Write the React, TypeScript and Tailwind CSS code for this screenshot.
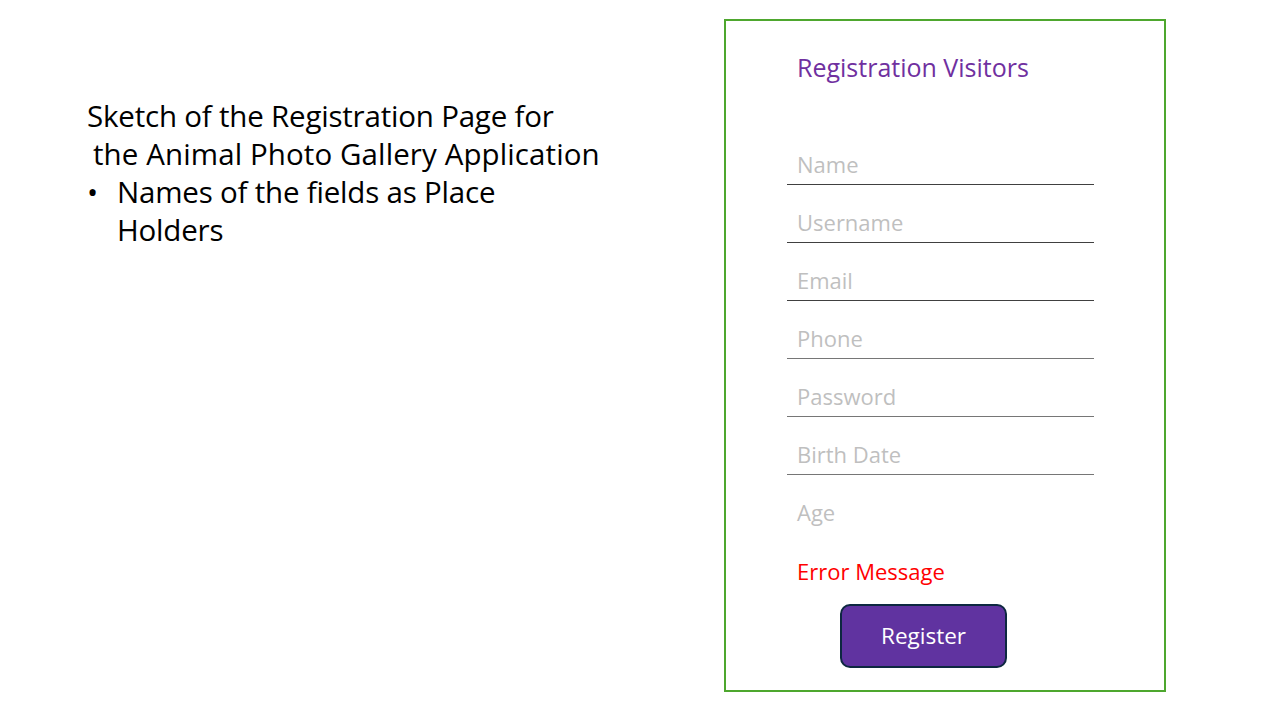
const fields = [
	{ label: 'Name', line: 'border-[#404040]' },
	{ label: 'Username', line: 'border-[#404040]' },
	{ label: 'Email', line: 'border-[#404040]' },
	{ label: 'Phone', line: 'border-[#767676]' },
	{ label: 'Password', line: 'border-[#767676]' },
	{ label: 'Birth Date', line: 'border-[#767676]' },
	{ label: 'Age', line: 'border-transparent' },
]

export default function App() {
	return (
		<div className="w-[1280px] h-[720px] bg-white flex font-['Open_Sans',sans-serif] text-black overflow-hidden">
			{/* slide notes */}
			<div className="w-[724px] pl-[87px] pt-[97px] text-[29.5px] leading-[38px]">
				<div className="tracking-[-0.2px]">Sketch of the Registration Page for</div>
				<div className="pl-[6px] tracking-[0.1px]">the Animal Photo Gallery Application</div>
				<div className="flex">
					<span className="w-[30px] shrink-0">•</span>
					<span className="w-[420px] tracking-[-0.2px]">Names of the fields as Place Holders</span>
				</div>
			</div>

			{/* registration form sketch */}
			<div className="mt-[19px] w-[442px] h-[673px] border-2 border-[#4ea72e] flex flex-col">
				<div className="h-[106px] pl-[71px] pt-[30px] text-[25px] leading-[32px] text-[#7030a0]">
					Registration Visitors
				</div>
				<div className="ml-[61px] w-[307px] flex flex-col">
					{fields.map((f) => (
						<div key={f.label} className={`h-[58px] flex items-end border-b-[1.5px] ${f.line}`}>
							<span className="pl-[10px] pb-[6px] text-[22px] leading-[28px] text-[#bfbfbf]">{f.label}</span>
						</div>
					))}
					<div className="h-[58px] flex items-end">
						<span className="pl-[10px] pb-[6px] text-[22px] leading-[28px] text-[#ff0000]">Error Message</span>
					</div>
					<button className="mt-[13px] ml-[53px] w-[167px] h-[64px] rounded-[10px] border-2 border-[#0e2841] bg-[#6033a0] text-white text-[22.5px]">
						Register
					</button>
				</div>
			</div>
		</div>
	)
}
